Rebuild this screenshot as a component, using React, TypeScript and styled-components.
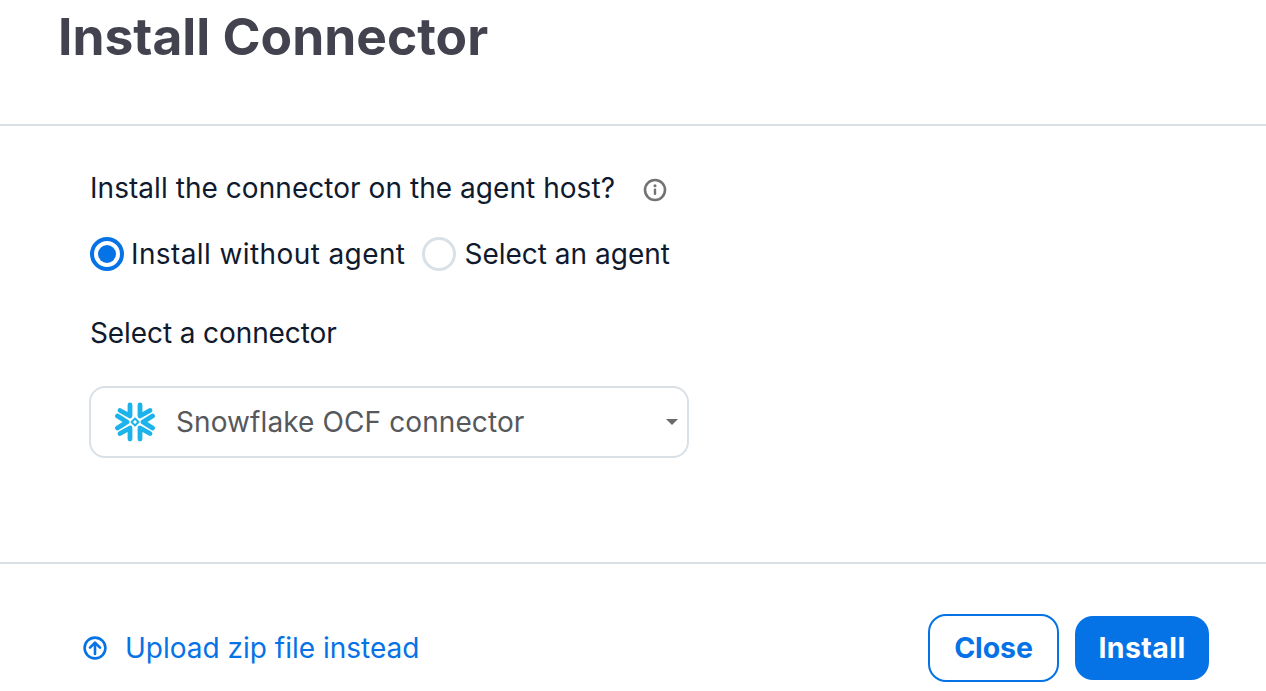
import React from "react";
import styled, { createGlobalStyle } from "styled-components";

const Global = createGlobalStyle`
  html, body { margin: 0; padding: 0; background: #fff; overflow: hidden; }
  * { box-sizing: border-box; }
  body { font-family: "Inter", "Liberation Sans", sans-serif; }
`;

const Page = styled.div`
  width: 1266px;
  height: 691px;
  display: flex;
  flex-direction: column;
`;
const Header = styled.header`
  height: 126px;
  padding-left: 58px;
  border-bottom: 2px solid #d9e0e6;
`;
const Title = styled.h1`
  margin: 0;
  font-size: 51.5px;
  line-height: 72px;
  font-weight: 700;
  color: #43434f;
`;
const Body = styled.main`
  height: 438px;
  padding: 44px 0 0 90px;
  border-bottom: 2px solid #d9e0e6;
  display: flex;
  flex-direction: column;
`;
const Question = styled.div`
  display: flex;
  align-items: center;
  gap: 28px;
  height: 36px;
  font-size: 28px;
  color: #101a2e;
  letter-spacing: 0.05px;
  svg { margin-top: 4px; }
`;
const RadioRow = styled.div`
  display: flex;
  align-items: center;
  gap: 17px;
  margin-top: 30px;
  height: 36px;
`;
const RadioOption = styled.label<{ $spacing?: number }>`
  display: flex;
  align-items: center;
  gap: ${(p) => (p.$spacing ? "7px" : "8px")};
  font-size: 28px;
  color: #101a2e;
  letter-spacing: ${(p) => p.$spacing ?? 0}px;
`;
const RadioMark = styled.span<{ $on?: boolean }>`
  width: 34px;
  height: 34px;
  border-radius: 50%;
  border: ${(p) => (p.$on ? "4px solid #0573e6" : "3px solid #d9e0e6")};
  display: flex;
  align-items: center;
  justify-content: center;
  &::after {
    content: "";
    width: 18px;
    height: 18px;
    border-radius: 50%;
    background: ${(p) => (p.$on ? "#0573e6" : "transparent")};
  }
`;
const FieldLabel = styled.div`
  margin-top: 43px;
  height: 36px;
  line-height: 36px;
  font-size: 28px;
  letter-spacing: -0.1px;
  color: #101a2e;
`;
const Select = styled.div`
  margin: 35px 0 0 -1px;
  width: 600px;
  height: 72px;
  border: 2px solid #d9e0e6;
  border-radius: 16px;
  display: flex;
  align-items: center;
  padding: 0 9px 0 24px;
  gap: 21px;
  font-size: 28px;
  letter-spacing: 0.1px;
  color: #56585c;
`;
const SelectText = styled.span`
  flex: 1;
`;
const Caret = styled.span`
  width: 0;
  height: 0;
  border-left: 6px solid transparent;
  border-right: 6px solid transparent;
  border-top: 6px solid #6b6b6b;
`;
const Footer = styled.footer`
  flex: 1;
  display: flex;
  align-items: center;
  justify-content: space-between;
  padding: 40px 57px 0 83px;
`;
const UploadLink = styled.a`
  display: flex;
  align-items: center;
  gap: 18px;
  font-size: 28px;
  color: #0573e6;
`;
const Actions = styled.div`
  display: flex;
  align-items: center;
  gap: 16px;
`;
const Button = styled.button<{ $primary?: boolean }>`
  font-family: inherit;
  font-size: 28.5px;
  font-weight: 700;
  letter-spacing: ${(p) => (p.$primary ? "0.4px" : "-0.1px")};
  padding: 0;
  cursor: pointer;
  border-radius: 18px;
  width: ${(p) => (p.$primary ? "134px" : "131px")};
  height: ${(p) => (p.$primary ? "64px" : "68px")};
  border: ${(p) => (p.$primary ? "none" : "2px solid #0573e6")};
  background: ${(p) => (p.$primary ? "#0573e6" : "#fff")};
  color: ${(p) => (p.$primary ? "#fff" : "#0573e6")};
`;

const InfoIcon = () => (
  <svg width="24" height="24" viewBox="0 0 24 24" fill="none">
    <circle cx="12" cy="12" r="10" stroke="#737373" strokeWidth="2.6" />
    <circle cx="12" cy="7.8" r="1.5" fill="#737373" />
    <rect x="10.8" y="10.5" width="2.4" height="6.5" rx="1" fill="#737373" />
  </svg>
);

const UploadIcon = () => (
  <svg width="24" height="24" viewBox="0 0 24 24" fill="none" stroke="#0573e6" strokeWidth="2.6" strokeLinecap="round" strokeLinejoin="round">
    <circle cx="12" cy="12" r="10.4" />
    <path d="M12 18V6.8M7 11.6l5-5 5 5" />
  </svg>
);

const SnowflakeIcon = () => (
  <svg width="40" height="40" viewBox="0 0 40 40" fill="none" stroke="#1cb2ea" strokeWidth="4.800" strokeLinecap="round" strokeLinejoin="round">
    <path d="M15 3v11L5 8.500" />
    <path d="M25 3v11l10-5.500" />
    <path d="M15 37V26L5 31.500" />
    <path d="M25 37V26l10 5.500" />
    <path d="M2.500 14 12 20l-9.500 6" />
    <path d="M37.500 14 28 20l9.500 6" />
    <path d="M20 16.500 23.500 20 20 23.500 16.500 20Z" strokeWidth="2" />
  </svg>
);

export default function App() {
  return (
    <Page>
      <Global />
      <Header>
        <Title>Install Connector</Title>
      </Header>
      <Body>
        <Question>
          Install the connector on the agent host?
          <InfoIcon />
        </Question>
        <RadioRow>
          <RadioOption $spacing={0.4}>
            <RadioMark $on />
            Install without agent
          </RadioOption>
          <RadioOption>
            <RadioMark />
            Select an agent
          </RadioOption>
        </RadioRow>
        <FieldLabel>Select a connector</FieldLabel>
        <Select>
          <SnowflakeIcon />
          <SelectText>Snowflake OCF connector</SelectText>
          <Caret />
        </Select>
      </Body>
      <Footer>
        <UploadLink>
          <UploadIcon />
          Upload zip file instead
        </UploadLink>
        <Actions>
          <Button>Close</Button>
          <Button $primary>Install</Button>
        </Actions>
      </Footer>
    </Page>
  );
}
